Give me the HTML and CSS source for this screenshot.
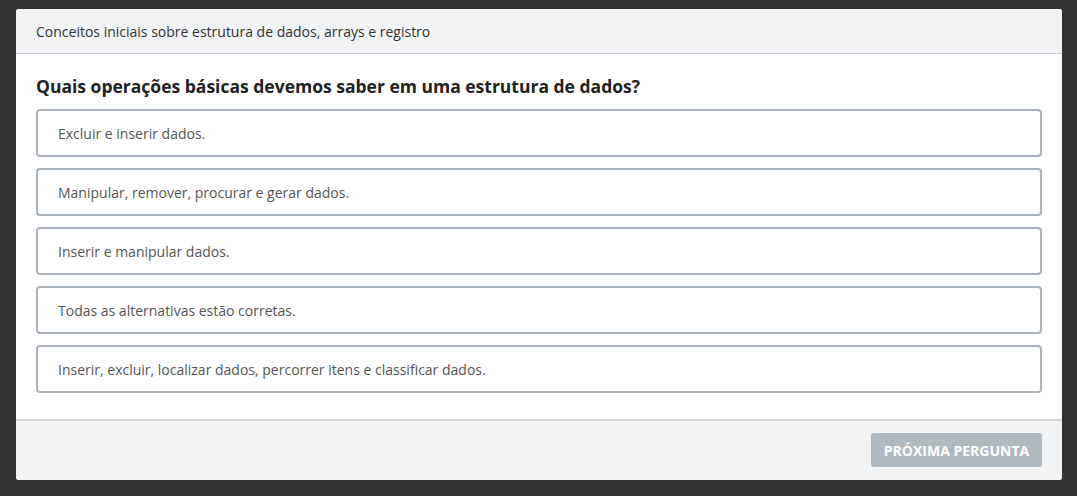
FILE: index.html
```html
<!DOCTYPE html>
<html lang="pt">
<head>
<meta charset="utf-8">
<link rel="stylesheet" href="styles.css">
</head>
<body>
<div class="card">
  <div class="card-header">Conceitos iniciais sobre estrutura de dados, arrays e registro</div>
  <div class="card-body">
    <h1 class="question">Quais operações básicas devemos saber em uma estrutura de dados?</h1>
    <div class="options">
      <div class="option">Excluir e inserir dados.</div>
      <div class="option">Manipular, remover, procurar e gerar dados.</div>
      <div class="option">Inserir e manipular dados.</div>
      <div class="option">Todas as alternativas estão corretas.</div>
      <div class="option">Inserir, excluir, localizar dados, percorrer itens e classificar dados.</div>
    </div>
  </div>
  <div class="card-footer">
    <button class="next-btn" disabled>Próxima pergunta</button>
  </div>
</div>
</body>
</html>
```
FILE: styles.css
```css
html, body {
  margin: 0;
  padding: 0;
  background: #323232;
}
body {
  padding: 9px 15px 16px 16px;
  font-family: "Open Sans", "Noto Sans", sans-serif;
}
.card {
  width: 1046px;
  background: #fff;
  border-radius: 3px;
  overflow: hidden;
}
.card-header {
  height: 45px;
  box-sizing: border-box;
  padding: 1px 20px 0 20px;
  display: flex;
  align-items: center;
  background: #f2f3f5;
  border-bottom: 1px solid #c5ccd3;
  font-size: 14px;
  color: #333;
}
.card-body {
  padding: 20px 20px 26px 20px;
}
.question {
  margin: 0 0 11px 0;
  font-size: 17.5px;
  line-height: 24px;
  font-weight: 700;
  color: #222;
}
.options {
  display: flex;
  flex-direction: column;
  gap: 11px;
}
.option {
  height: 48px;
  box-sizing: border-box;
  border: 2px solid #aab3bc;
  border-radius: 4px;
  padding: 1px 20px 0 20px;
  display: flex;
  align-items: center;
  font-size: 14px;
  color: #555;
}
.card-footer {
  height: 61px;
  box-sizing: border-box;
  border-top: 2px solid #d3d6da;
  background: #f2f3f5;
  display: flex;
  justify-content: flex-end;
  align-items: center;
  padding: 0 20px 1px 0;
}
.next-btn {
  width: 171px;
  height: 34px;
  border: none;
  border-radius: 3px;
  background: #b1b9c0;
  color: #fff;
  font-family: "Open Sans", "Noto Sans", sans-serif;
  font-size: 14px;
  font-weight: 700;
  text-transform: uppercase;
  padding: 0;
}
```
